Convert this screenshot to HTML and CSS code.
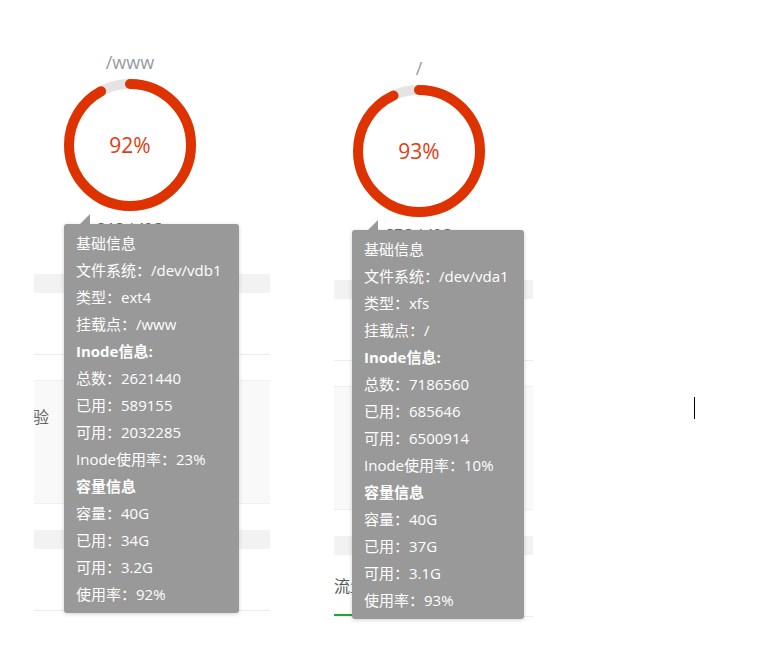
FILE: index.html
```html
<!DOCTYPE html>
<html lang="zh-CN">
<head>
<meta charset="utf-8">
<title>磁盘</title>
<link rel="stylesheet" href="styles.css">
</head>
<body>
<div class="page">
  <div class="col col-a">
    <div class="disk disk-a">
      <div class="disk-title">/www</div>
      <div class="ring">
        <svg class="ring-svg" width="132" height="132" viewBox="0 0 132 132">
          <circle cx="66" cy="66" r="61" fill="none" stroke="#e4e4e4" stroke-width="10"/>
          <circle cx="66" cy="66" r="61" fill="none" stroke="#de3200" stroke-width="10" stroke-linecap="round" stroke-dasharray="352.6 383.3" transform="rotate(-90 66 66)"/>
        </svg>
        <span class="ring-pct">92%</span>
      </div>
      <div class="disk-size">34G / 40G</div>
      <div class="tip tip-a">
        <span class="tip-arrow"></span>
        <div class="tip-row">基础信息</div>
        <div class="tip-row">文件系统：/dev/vdb1</div>
        <div class="tip-row">类型：ext4</div>
        <div class="tip-row">挂载点：/www</div>
        <div class="tip-row tip-head">Inode信息:</div>
        <div class="tip-row">总数：2621440</div>
        <div class="tip-row">已用：589155</div>
        <div class="tip-row">可用：2032285</div>
        <div class="tip-row">Inode使用率：23%</div>
        <div class="tip-row tip-head">容量信息</div>
        <div class="tip-row">容量：40G</div>
        <div class="tip-row">已用：34G</div>
        <div class="tip-row">可用：3.2G</div>
        <div class="tip-row">使用率：92%</div>
      </div>
    </div>
    <div class="band"></div>
    <div class="blank"></div>
    <div class="box"><span class="box-link">验</span></div>
    <div class="band band-low"></div>
    <div class="blank"></div>
  </div>

  <div class="col col-b">
    <div class="disk disk-b">
      <div class="disk-title">/</div>
      <div class="ring">
        <svg class="ring-svg" width="132" height="132" viewBox="0 0 132 132">
          <circle cx="66" cy="66" r="61" fill="none" stroke="#e4e4e4" stroke-width="10"/>
          <circle cx="66" cy="66" r="61" fill="none" stroke="#de3200" stroke-width="10" stroke-linecap="round" stroke-dasharray="356.4 383.3" transform="rotate(-90 66 66)"/>
        </svg>
        <span class="ring-pct">93%</span>
      </div>
      <div class="disk-size">37G / 40G</div>
      <div class="tip tip-b">
        <span class="tip-arrow"></span>
        <div class="tip-row">基础信息</div>
        <div class="tip-row">文件系统：/dev/vda1</div>
        <div class="tip-row">类型：xfs</div>
        <div class="tip-row">挂载点：/</div>
        <div class="tip-row tip-head">Inode信息:</div>
        <div class="tip-row">总数：7186560</div>
        <div class="tip-row">已用：685646</div>
        <div class="tip-row">可用：6500914</div>
        <div class="tip-row">Inode使用率：10%</div>
        <div class="tip-row tip-head">容量信息</div>
        <div class="tip-row">容量：40G</div>
        <div class="tip-row">已用：37G</div>
        <div class="tip-row">可用：3.1G</div>
        <div class="tip-row">使用率：93%</div>
      </div>
    </div>
    <div class="band"></div>
    <div class="blank"></div>
    <div class="box"></div>
    <div class="band band-low"></div>
    <div class="blank blank-tab"><span class="tab">流量</span></div>
  </div>
</div>
<span class="caret"></span>
</body>
</html>
```

FILE: styles.css
```css
html, body {
  margin: 0;
  padding: 0;
  background: #ffffff;
}
body {
  font-family: "Open Sans", "Noto Sans CJK SC", "Noto Sans", sans-serif;
  color: #555555;
  position: relative;
  width: 777px;
  height: 649px;
  overflow: hidden;
}
.page {
  display: flex;
  align-items: flex-start;
  padding-left: 34px;
  padding-top: 50px;
  gap: 64px;
}
.col {
  display: flex;
  flex-direction: column;
}
.col-a { width: 236px; }
.col-b { width: 199px; margin-top: 6px; }

.disk {
  position: relative;
  width: 132px;
  z-index: 2;
}
.disk-a { margin-left: 30px; }
.disk-b { margin-left: 19px; }

.disk-title {
  text-align: center;
  font-size: 18px;
  line-height: 24px;
  height: 24px;
  color: #959ba1;
  margin-bottom: 5px;
}
.ring {
  position: relative;
  width: 132px;
  height: 132px;
  display: flex;
  align-items: center;
  justify-content: center;
}
.ring-svg {
  position: absolute;
  left: 0;
  top: 0;
}
.ring-pct {
  position: relative;
  font-size: 21px;
  color: #e23c12;
  line-height: 24px;
}
.disk-size {
  margin-top: 7px;
  text-align: center;
  font-size: 14px;
  line-height: 20px;
  color: #666666;
}

.tip {
  position: absolute;
  top: 174px;
  background: #999999;
  color: #ffffff;
  border-radius: 3px;
  box-shadow: 0 1px 4px rgba(0, 0, 0, 0.18);
  padding: 6px 0 5px 12px;
  box-sizing: border-box;
  height: 389px;
  font-size: 15px;
}
.tip-a { left: 0; width: 175px; }
.tip-b { left: -1px; width: 172px; }
.tip-row {
  line-height: 27px;
  height: 27px;
  white-space: nowrap;
}
.tip-head { font-weight: bold; }
.tip-arrow {
  position: absolute;
  left: 16px;
  top: -10px;
  width: 0;
  height: 0;
  border-left: 10px solid transparent;
  border-bottom: 10px solid #999999;
}

.band {
  height: 19px;
  background: #f2f2f2;
  margin-top: 36px;
}
.band-low { margin-top: 26px; }
.blank {
  height: 61px;
  border-bottom: 1px solid #ececec;
}
.box {
  margin-top: 25px;
  height: 122px;
  background: #f9f9f9;
  border-top: 1px solid #efefef;
  border-bottom: 1px solid #efefef;
  overflow: hidden;
  box-sizing: content-box;
}
.box-link {
  display: block;
  margin-top: 26px;
  margin-left: -1px;
  font-size: 16px;
  line-height: 20px;
  color: #666666;
}
.blank-tab {
  display: flex;
  align-items: flex-end;
}
.tab {
  display: inline-block;
  font-size: 16px;
  line-height: 20px;
  padding-bottom: 18px;
  border-bottom: 2px solid #20a53a;
  color: #555555;
  width: 40px;
}
.caret {
  position: absolute;
  left: 694px;
  top: 397px;
  width: 1px;
  height: 22px;
  background: #000000;
}
```
